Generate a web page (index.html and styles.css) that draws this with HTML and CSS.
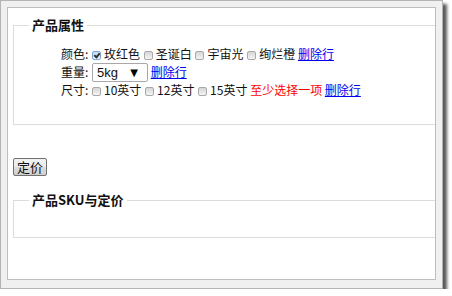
FILE: index.html
```html
<!DOCTYPE html>
<html lang="zh-CN">
    <head>
        <meta charset="UTF-8">
        <title>产品属性</title>
        <link rel="stylesheet" href="styles.css">
    </head>
    <body>
        <div class="frame">
            <div class="page">
                <fieldset class="box attrs">
                    <legend>产品属性</legend>
                    <div class="rows">
                        <div class="row">
                            颜色:
                            <label><input type="checkbox" checked>玫红色</label>
                            <label><input type="checkbox">圣诞白</label>
                            <label><input type="checkbox">宇宙光</label>
                            <label><input type="checkbox">绚烂橙</label>
                            <a href="#">删除行</a>
                        </div>
                        <div class="row">
                            重量:
                            <span class="select"><span>5kg</span><span class="arrow">&#9660;</span></span>
                            <a href="#">删除行</a>
                        </div>
                        <div class="row">
                            尺寸:
                            <label><input type="checkbox">10英寸</label>
                            <label><input type="checkbox">12英寸</label>
                            <label><input type="checkbox">15英寸</label>
                            <span class="warn">至少选择一项</span>
                            <a href="#">删除行</a>
                        </div>
                    </div>
                </fieldset>
                <button class="btn">定价</button>
                <fieldset class="box sku">
                    <legend>产品SKU与定价</legend>
                </fieldset>
            </div>
        </div>
    </body>
</html>
```

FILE: styles.css
```css
body {
    margin: 0;
    background: #fff;
    font-family: "Noto Sans CJK SC", "Liberation Sans", sans-serif;
    font-size: 12px;
    color: #111;
}

.frame {
    width: 443px;
    height: 289px;
    box-sizing: border-box;
    border: 1px solid #b4b4b4;
    background: #f0f0f0;
    padding: 6px;
    box-shadow: 4px 4px 3px rgba(0, 0, 0, 0.65);
}

.page {
    height: 273px;
    box-sizing: border-box;
    border: 1px solid #bdbdbd;
    background: #fff;
    overflow: hidden;
    padding: 7px 0 0 5px;
}

.box {
    width: 440px;
    margin: 0;
    padding: 0 0 0 15px;
    border: 1px solid #dcdcdc;
}

.box legend {
    padding: 0 3px;
    font-weight: bold;
    line-height: 20px;
    font-size: 13px;
    color: #111;
}

.attrs {
    height: 110px;
    box-sizing: border-box;
}

.rows {
    padding: 10px 0 0 32px;
}

.row {
    height: 18px;
    line-height: 18px;
    white-space: nowrap;
}

.row label {
    margin-left: 1px;
}

.row input {
    appearance: none;
    box-sizing: border-box;
    width: 9px;
    height: 9px;
    margin: 0 3px 0 0;
    border: 1px solid #a9a9a9;
    border-radius: 2px;
    background: linear-gradient(#d6d6d6, #f4f4f4);
    vertical-align: -1px;
    position: relative;
}

.row input:checked {
    border-color: #7fa4d4;
    background: linear-gradient(#c9dcf3, #e8f0fb);
}

/* tick drawn with two borders */
.row input:checked::before {
    content: "";
    position: absolute;
    left: 2px;
    top: 0;
    width: 2px;
    height: 4px;
    border: solid #333;
    border-width: 0 2px 2px 0;
    transform: rotate(40deg);
}

.row a {
    color: #00e;
}

.warn {
    color: #f00;
}

.select {
    display: inline-flex;
    justify-content: space-between;
    align-items: center;
    width: 56px;
    height: 19px;
    box-sizing: border-box;
    padding: 0 9px 0 4px;
    margin: 0 0 0 1px;
    border: 1px solid #a8a8a8;
    border-radius: 2px;
    vertical-align: top;
    font-family: "Liberation Sans", sans-serif;
    font-size: 13px;
    line-height: 17px;
}

.select .arrow {
    font-family: "DejaVu Sans", sans-serif;
    font-size: 10px;
    color: #000;
}

.btn {
    display: block;
    margin: 33px 0 0 0;
    padding: 0 3px;
    height: 18px;
    font-family: inherit;
    font-size: 13px;
    line-height: 14px;
    border: 1px solid #707070;
    border-radius: 2px;
    background: linear-gradient(#f2f2f2 0%, #ebebeb 50%, #dddddd 51%, #cfcfcf 100%);
    color: #111;
}

.sku {
    height: 48px;
    margin-top: 14px;
    box-sizing: border-box;
}
```
